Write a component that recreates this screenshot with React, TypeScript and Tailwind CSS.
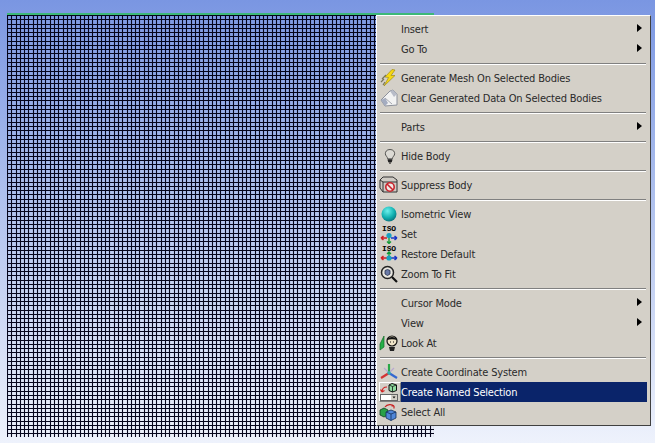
import React from "react";

type MenuRow = {
  label?: string;
  icon?: React.ReactNode;
  submenu?: boolean;
  active?: boolean;
  separator?: boolean;
};

function Lightning() {
  return (
    <svg width="18" height="18" viewBox="0 0 18 18">
      <path d="M2 10 L6 6 M1 13 L4 10 M3 16 L5 13" stroke="#77745c" strokeWidth="1.2" />
      <path d="M12 0.5 L5 8 L8.5 8.5 L4 17 L15 6.5 L11 6.5 L15 1 Z" fill="#f6d812" stroke="#a08c18" strokeWidth="0.7" />
    </svg>
  );
}

function Eraser() {
  return (
    <svg width="18" height="18" viewBox="0 0 18 18">
      <path d="M1 11 L10 2 L13 1 L17 5 L17 16 L5 17 Z" fill="#f2f2f2" stroke="#8c909a" strokeWidth="1" />
      <path d="M1 11 L5 17 L8 14 L5 9 Z" fill="#a4acc0" />
      <path d="M5 9 L12 15" stroke="#a5a8b0" strokeWidth="1" />
      <path d="M10 2 L13 1 L17 5 L14 8 Z" fill="#b8bcc8" />
    </svg>
  );
}

function Bulb() {
  return (
    <svg width="14" height="17" viewBox="0 0 18 20" className="translate-x-[1px]">
      <path d="M9 1 C4.5 1 3 4 3 6.5 C3 9 6 10.5 6 13 L12 13 C12 10.5 15 9 15 6.5 C15 4 13.5 1 9 1 Z" fill="#dcdad4" stroke="#4a4a48" strokeWidth="1.2" />
      <path d="M6 14.5 H12 M6.5 16.5 H11.5 M8 18.5 H10" stroke="#222" strokeWidth="1.8" />
    </svg>
  );
}

function Suppress() {
  return (
    <svg width="20" height="18" viewBox="0 0 20 18">
      <path d="M1 4 L4 1 L14 1 L18 4 L18 16 L4 16 L1 12 Z" fill="#cfcbc4" stroke="#333" strokeWidth="1" />
      <path d="M1 4 L4 6 L18 6 M4 6 V16" fill="none" stroke="#333" strokeWidth="1" />
      <circle cx="11" cy="11" r="4.2" fill="#f1e8e4" stroke="#c8242c" strokeWidth="1.6" />
      <path d="M8 8 L14 14" stroke="#c8242c" strokeWidth="1.6" />
    </svg>
  );
}

function Sphere() {
  return (
    <svg width="16" height="16" viewBox="0 0 17 17">
      <defs>
        <radialGradient id="ball" cx="0.4" cy="0.3" r="0.75">
          <stop offset="0" stopColor="#6cf0ec" />
          <stop offset="0.6" stopColor="#10b0b0" />
          <stop offset="1" stopColor="#0a6c78" />
        </radialGradient>
      </defs>
      <circle cx="8.5" cy="8.5" r="8" fill="url(#ball)" />
    </svg>
  );
}

function IsoAxes({ flip }: { flip?: boolean }) {
  return (
    <span className="relative block h-[20px] w-[18px]">
      <span className="absolute left-0 top-[1px] w-[18px] text-center font-['Liberation_Mono',monospace] text-[8px] leading-[8px] font-bold text-black">
        ISO
      </span>
      <svg className="absolute left-0 top-[7px]" width="18" height="13" viewBox="0 0 18 13">
        <path d={flip ? "M9 7 V1 M7 3 L9 1 L11 3" : "M9 6 V12.5 M7 10.5 L9 12.5 L11 10.5"} stroke="#0e9a34" strokeWidth="1.3" fill="none" />
        <path d="M1 7 H7 M1 7 L3.5 5 M1 7 L3.5 9" stroke="#d01c24" strokeWidth="1.6" fill="none" />
        <path d="M11 7 H17 M17 7 L14.5 5 M17 7 L14.5 9" stroke="#1a36c8" strokeWidth="1.6" fill="none" />
        <circle cx="9" cy={flip ? 7 : 4.5} r="2.6" fill="#18a0c0" />
      </svg>
    </span>
  );
}

function ZoomFit() {
  return (
    <svg width="18" height="18" viewBox="0 0 18 18">
      <circle cx="7.5" cy="7.5" r="6" fill="#e8e6e0" stroke="#222" strokeWidth="1.5" />
      <path d="M5 5.5 L7.5 4.5 L10 5.5 V9 L7.5 10.5 L5 9 Z" fill="#6a7aa8" stroke="#26304a" strokeWidth="0.8" />
      <path d="M12 12 L17 17" stroke="#111" strokeWidth="2.2" />
    </svg>
  );
}

function LookAt() {
  return (
    <svg width="20" height="18" viewBox="0 0 20 18">
      <path d="M1 10 L5 2 L5 13 L1 16 Z" fill="#25b048" stroke="#146a2a" strokeWidth="0.7" />
      <circle cx="13" cy="7" r="5" fill="#efe4c8" stroke="#111" strokeWidth="1.2" />
      <path d="M8 6 C9 2 17 2 18 6 C15 5 11 5 8 6 Z" fill="#111" />
      <path d="M10 13 L16 13 L15 17 L11 17 Z" fill="#222" />
      <path d="M11 8 H12 M14 8 H15" stroke="#111" strokeWidth="1" />
    </svg>
  );
}

function CoordSystem() {
  return (
    <svg width="20" height="18" viewBox="0 0 20 18">
      <path d="M10 10 L10 1" stroke="#2aa848" strokeWidth="2.2" />
      <path d="M10 10 L2 15" stroke="#d43434" strokeWidth="2.2" />
      <path d="M10 10 L18 15" stroke="#3468d0" strokeWidth="2.2" />
      <path d="M10 10 L5 5 M10 10 L15 5" stroke="#b8a8d0" strokeWidth="1.2" />
      <circle cx="10" cy="10" r="1.8" fill="#30b0b0" />
    </svg>
  );
}

function NamedSelection() {
  return (
    <svg width="18" height="18" viewBox="0 0 18 18">
      <path d="M9 2 L12 0.5 L16.5 2 L16.5 7.5 L12.5 9 L9 7.5 Z" fill="#8fdc9f" stroke="#111" strokeWidth="1" />
      <path d="M9 2 L12.5 3.5 L16.5 2 M12.5 3.5 V9" fill="none" stroke="#111" strokeWidth="0.8" />
      <path d="M7 4 C3.5 4 2 6 2 9 M2 9 L0.5 6.5 M2 9 L4.5 7.5" fill="none" stroke="#d02020" strokeWidth="1.2" />
      <rect x="0.5" y="11.5" width="17" height="6" fill="#fff" stroke="#666" strokeWidth="1" />
      <rect x="11" y="12" width="6" height="5" fill="#d4d0c8" />
      <path d="M12.5 13.5 H15.5 L14 15.5 Z" fill="#111" />
    </svg>
  );
}

function SelectAll() {
  return (
    <svg width="20" height="18" viewBox="0 0 20 18">
      <path d="M6 4 C8 1 13 1 15 3 M15 3 L12.5 3 M15 3 L15 5.5" fill="none" stroke="#c82020" strokeWidth="1.2" />
      <path d="M1 7 L5 5 L9 7 V12 L5 14 L1 12 Z" fill="#28a048" stroke="#0f3c20" strokeWidth="0.8" />
      <path d="M7 9 L12 7 L17 9 V15 L12 17.5 L7 15 Z" fill="#4f86d8" stroke="#12305c" strokeWidth="0.8" />
      <path d="M7 9 L12 11 L17 9 M12 11 V17.5" fill="none" stroke="#12305c" strokeWidth="0.8" />
    </svg>
  );
}

const rows: MenuRow[] = [
  { label: "Insert", submenu: true },
  { label: "Go To", submenu: true },
  { separator: true },
  { label: "Generate Mesh On Selected Bodies", icon: <Lightning /> },
  { label: "Clear Generated Data On Selected Bodies", icon: <Eraser /> },
  { separator: true },
  { label: "Parts", submenu: true },
  { separator: true },
  { label: "Hide Body", icon: <Bulb /> },
  { separator: true },
  { label: "Suppress Body", icon: <Suppress /> },
  { separator: true },
  { label: "Isometric View", icon: <Sphere /> },
  { label: "Set", icon: <IsoAxes /> },
  { label: "Restore Default", icon: <IsoAxes flip /> },
  { label: "Zoom To Fit", icon: <ZoomFit /> },
  { separator: true },
  { label: "Cursor Mode", submenu: true },
  { label: "View", submenu: true },
  { label: "Look At", icon: <LookAt /> },
  { separator: true },
  { label: "Create Coordinate System", icon: <CoordSystem /> },
  { label: "Create Named Selection", icon: <NamedSelection />, active: true },
  { label: "Select All", icon: <SelectAll /> },
];

const meshW = 427;
const meshH = 422;
const cell = 4.27;

function Mesh() {
  const xs = Array.from({ length: Math.ceil(meshW / cell) }, (_, i) => Math.round(i * cell) + 0.5);
  const ys = Array.from({ length: Math.ceil(meshH / cell) }, (_, i) => Math.round(i * cell) + 0.5);
  return (
    <svg width={meshW} height={meshH} className="block">
      {xs.map((x) => (
        <line key={x} x1={x} x2={x} y1={0} y2={meshH} stroke="#05051c" strokeWidth="1.1" />
      ))}
      {ys.map((y) => (
        <line key={y} x1={0} x2={meshW} y1={y} y2={y} stroke="#05051c" strokeWidth="1.1" />
      ))}
    </svg>
  );
}

function Row({ row }: { row: MenuRow }) {
  if (row.separator) {
    return (
      <div className="flex h-[9px] flex-col justify-center px-[1px]">
        <div className="h-[1px] bg-[#808080]" />
        <div className="h-[1px] bg-white" />
      </div>
    );
  }

  return (
    <div className="flex h-[20px] items-center">
      <div
        className={`flex h-[20px] w-[22px] shrink-0 items-center justify-center pr-[2px] ${
          row.active
            ? "border-t border-l border-white border-r-[#808080] border-b-[#808080] border-r border-b"
            : ""
        }`}
      >
        {row.icon}
      </div>
      <div
        className={`flex h-[20px] flex-1 items-center justify-between pr-[5px] ${
          row.active ? "bg-[#0a246a] text-white" : "text-[#2a2a2a]"
        }`}
      >
        <span className="whitespace-nowrap pt-[2px]">{row.label}</span>
        {row.submenu && (
          <span className="h-0 w-0 -translate-y-[1px] border-y-[4px] border-l-[5px] border-y-transparent border-l-black" />
        )}
      </div>
    </div>
  );
}

export default function App() {
  return (
    <div className="relative h-[443px] w-[655px] overflow-hidden bg-[linear-gradient(180deg,#7a96e2_0%,#a9bcec_40%,#eef2fc_100%)] pl-[7px] pt-[13px]">
      <div className="h-[424px] w-[427px] border-t-[2px] border-[#3cb878]">
        <Mesh />
      </div>

      <div className="absolute left-[376px] top-[15px] w-[275px] border border-t-white border-l-white border-r-[#404040] border-b-[#404040] bg-[#d4d0c8] py-[3px] pl-[2px] pr-[3px] font-['DejaVu_Sans_Condensed','Liberation_Sans',sans-serif] text-[11px] tracking-[-0.18px]">
        {rows.map((row, i) => (
          <Row key={i} row={row} />
        ))}
      </div>
    </div>
  );
}
